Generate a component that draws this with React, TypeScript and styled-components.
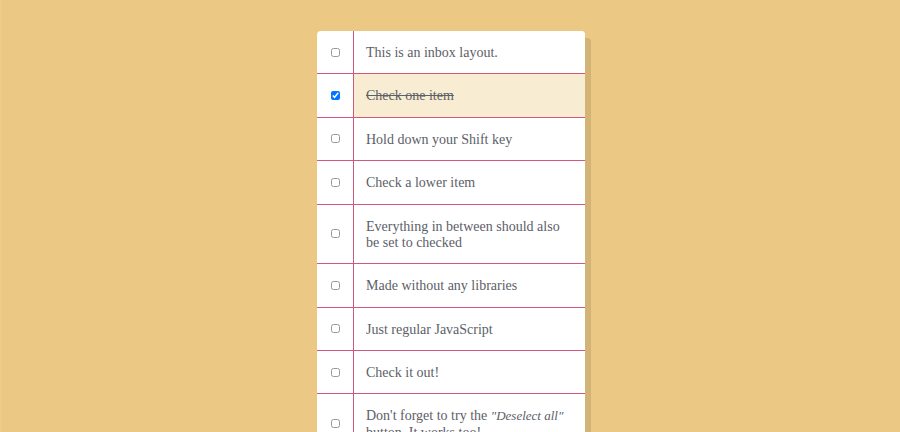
import React, { useRef, useState } from "react";
import styled, { createGlobalStyle } from "styled-components";

const GlobalStyle = createGlobalStyle`
  *, *::before, *::after { box-sizing: border-box; }
  body {
    margin: 0;
    background: #ebc884;
    font-family: "Roboto Slab", "Liberation Serif", serif;
    font-weight: 300;
    color: #5c6068;
  }
`;

const Page = styled.main`
  min-height: 100vh;
  padding: 31px 16px;
  border-left: 2px solid #eecb8b;
`;

const Inbox = styled.ul`
  list-style: none;
  width: 100%;
  max-width: 268px;
  margin: 0 auto;
  padding: 0;
  overflow: hidden;
  background: #fff;
  border-radius: 4px;
  box-shadow: 6px 7px 0 rgba(0, 0, 0, 0.1);
`;

const Item = styled.li`
  display: flex;
  align-items: stretch;
  border-bottom: 1px solid #d0587c;

  &:last-child { border-bottom: 0; }
`;

const CheckCell = styled.span`
  display: flex;
  flex: none;
  align-items: center;
  justify-content: center;
  width: 36px;
`;

const Checkbox = styled.input`
  width: 9px;
  height: 9px;
  margin: 0;
  accent-color: #0075ff;

  &:not(:checked) { opacity: 0.75; }
`;

const Label = styled.label<{ $done: boolean }>`
  flex: 1;
  padding: 14px 12px 12px;
  border-left: 1px solid #d0587c;
  font-size: 14px;
  line-height: 1.17;
  background: ${({ $done }) => ($done ? "#f8edd3" : "#fff")};
  text-decoration: ${({ $done }) => ($done ? "line-through" : "none")};
`;

const Emphasis = styled.em`
  font-size: 13px;
`;

const items: React.ReactNode[] = [
  "This is an inbox layout.",
  "Check one item",
  "Hold down your Shift key",
  "Check a lower item",
  "Everything in between should also be set to checked",
  "Made without any libraries",
  "Just regular JavaScript",
  "Check it out!",
  <>Don't forget to try the <Emphasis>"Deselect all"</Emphasis> button. It works too!</>,
];

export default function App() {
  const [checked, setChecked] = useState(items.map((_, i) => i === 1));
  const last = useRef(1);

  const toggle = (index: number, shift: boolean) => {
    const value = !checked[index];
    const from = shift && value ? Math.min(last.current, index) : index;
    const to = shift && value ? Math.max(last.current, index) : index;
    setChecked(checked.map((c, i) => (i >= from && i <= to ? value : c)));
    last.current = index;
  };

  return (
    <>
      <GlobalStyle />
      <Page>
        <Inbox>
          {items.map((text, i) => (
            <Item key={i}>
              <CheckCell>
                <Checkbox
                  type="checkbox"
                  id={`item-${i}`}
                  checked={checked[i]}
                  onChange={(e) => toggle(i, (e.nativeEvent as MouseEvent).shiftKey)}
                />
              </CheckCell>
              <Label htmlFor={`item-${i}`} $done={checked[i]}>{text}</Label>
            </Item>
          ))}
        </Inbox>
      </Page>
    </>
  );
}
